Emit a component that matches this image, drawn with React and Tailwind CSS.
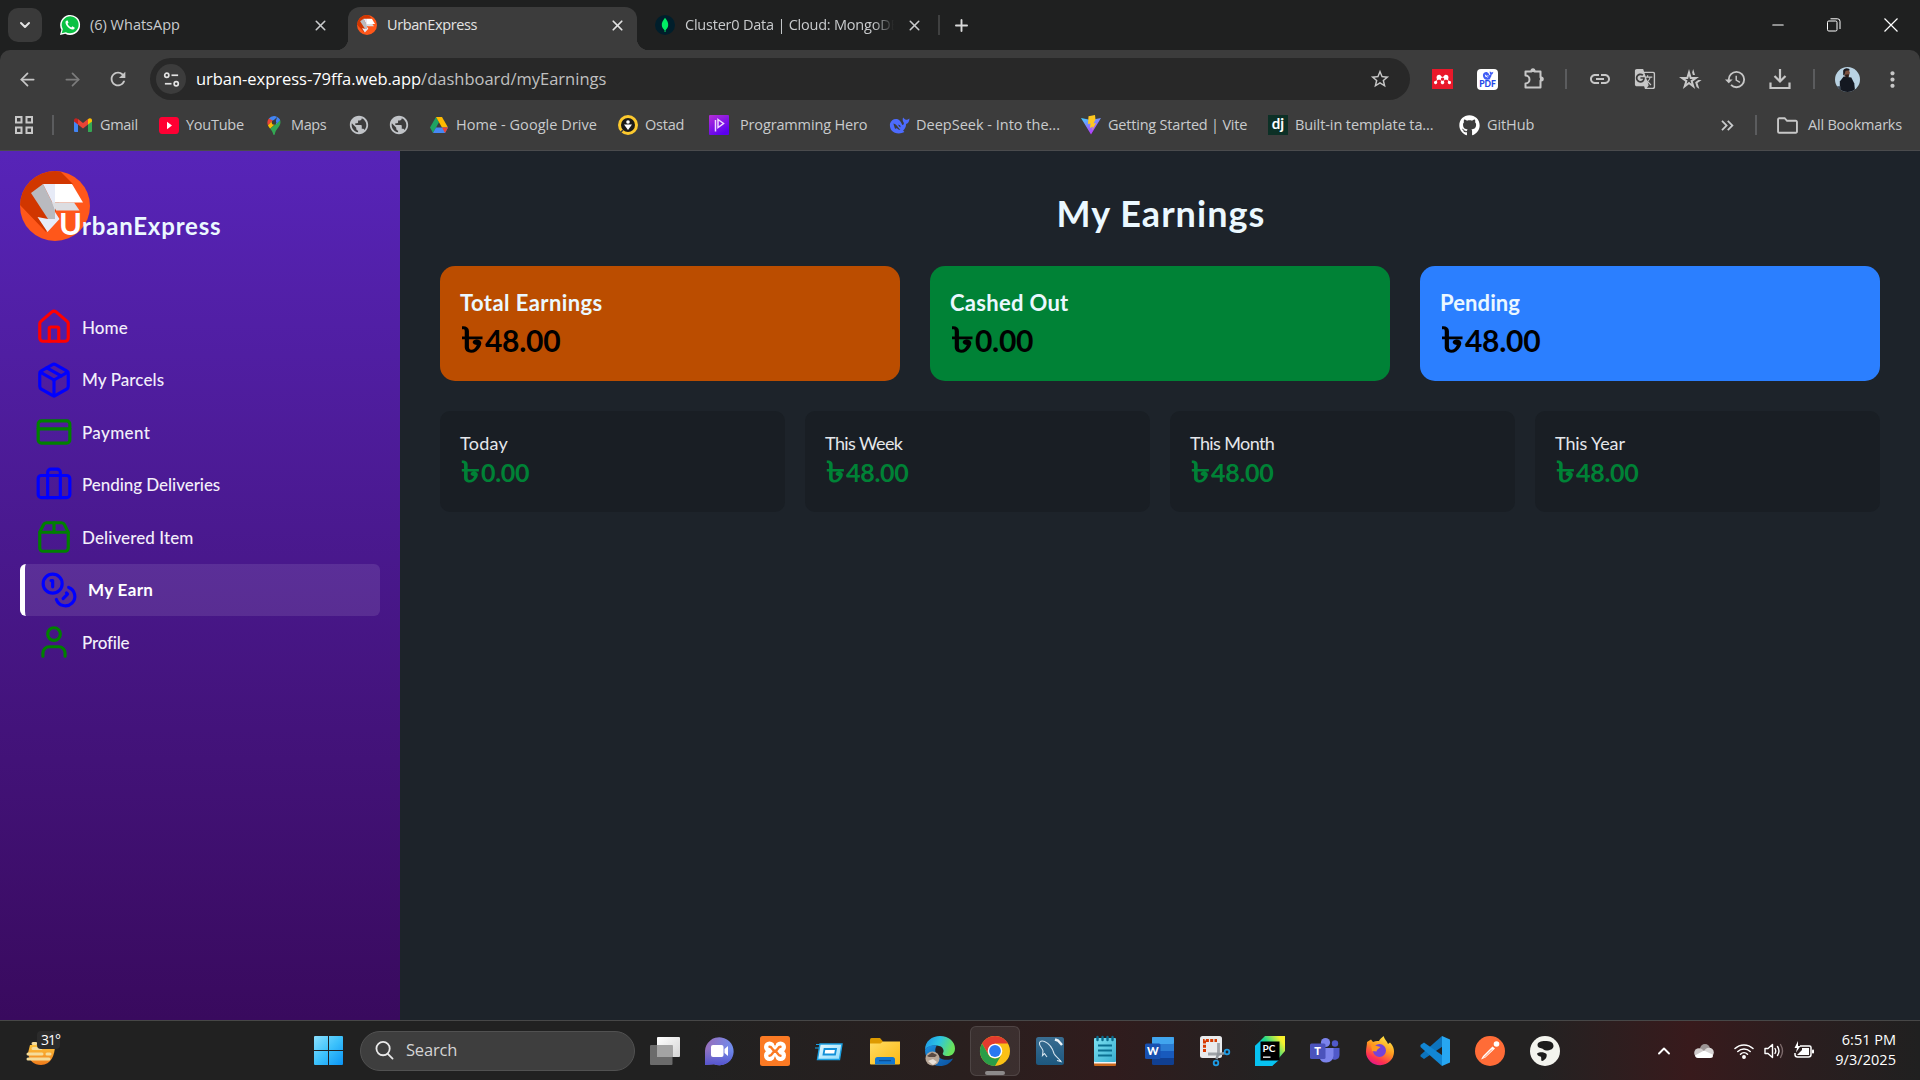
import React from "react";
import {
  House, Package, CreditCard, Briefcase, Package2, Coins, User,
  ArrowLeft, ArrowRight, ChevronDown, ChevronUp, X, Plus, Minus,
} from "lucide-react";
import { FaGithub } from "react-icons/fa6";
import { SiMendeley } from "react-icons/si";
import {
  MdPublic, MdStarBorder, MdHistory, MdLink, MdGTranslate,
  MdMoreVert, MdRefresh, MdOutlineHotelClass, MdKeyboardDoubleArrowRight,
} from "react-icons/md";

const Logo = ({ className }) => (
  <svg viewBox="0 0 70 70" className={className}>
    <defs>
      <clipPath id="disc"><circle cx="35" cy="35" r="35" /></clipPath>
    </defs>
    <g clipPath="url(#disc)">
      <rect width="70" height="70" fill="#ff571a" />
      <path d="M0 0H40L53 13 40 30 26 61 0 34Z" fill="#d13600" />
      <path d="M23 13 11 22 28 48H35V37Z" fill="#b9babf" />
      <path d="M23 13H35V39L32 31Z" fill="#e7ebf7" />
      <path d="M35 13H52L63 31.500H35Z" fill="#fff" />
      <path d="M32 31.500H54L59.500 39.500H36Z" fill="#dcdde1" />
      <path d="M17.500 46 28 48H35V41L39.500 48 27.500 61Z" fill="#e7ebf7" />
    </g>
  </svg>
);

const Mongo = () => (
  <svg viewBox="0 0 20 20" className="size-5">
    <circle cx="10" cy="10" r="10" fill="#001e2b" />
    <path d="M10 2.800C12.200 5.400 13.400 7.500 13.200 10.300 13 12.900 11.500 14.300 10.500 15.200V17H9.600V15.200C8.500 14.300 7 12.900 6.800 10.300 6.600 7.500 8 5.400 10 2.800Z" fill="#00ed64" />
  </svg>
);

const WhatsApp = () => (
  <svg viewBox="0 0 24 24" className="size-5 overflow-visible">
    <path d="M0 24 1.700 17.800A12 12 0 1 1 6.300 22.400Z" fill="#fff" />
    <path d="M2 22 3.400 17A10.200 10.200 0 1 1 7 20.600Z" fill="#0bc143" />
    <path d="M8.500 6.500C7.500 6.500 6.500 7.600 6.600 9 6.800 12.600 11.200 17.200 15 17.400 16.500 17.400 17.700 16.400 17.700 15.200L14.900 13.500 13.500 15C11.500 14.300 9.700 12.400 9 10.600L10.200 9.300 9.200 6.600Z" fill="#fff" />
  </svg>
);

const Whale = ({ className, color = "#4d6bfe", hole = "#3c3c3c" }) => (
  <svg viewBox="0 0 22 18" className={className}>
    <path d="M1 7C2 3.500 5 1.500 8.500 2.200 11 3 12.500 5 14 8.500 16 8 16 6.500 14.800 4.800 14.200 3.500 14.300 2 14.800.5 15.800 1.800 16.800 2.700 18 2.800 19.200 2.800 20.500 2.500 21.500 1.500 21.500 4 20.500 6.600 18 7.400 18 11 16.300 13 14.800 14.400L16.200 16C12 18.200 5.500 17.800 2.700 14.300 1.200 12.300.5 9.500 1 7Z" fill={color} />
    <path d="M4.500 7C6.500 7 9 10 11.800 13.800 9.500 13.800 8.800 12 7.800 11.700 7.500 13 6 12.500 5.800 11Z" fill={hole} />
    <path d="M9.500 8.300Q12 7.800 12.300 10.800L10.800 10.300Z" fill={hole} />
  </svg>
);

const AppsGrid = () => (
  <svg viewBox="0 0 18 18" className="size-[18px]" fill="none" stroke="#c7c7c7" strokeWidth="2">
    <rect x="1" y="1" width="5.500" height="5.500" /><rect x="11.500" y="1" width="5.500" height="5.500" />
    <rect x="1" y="11.500" width="5.500" height="5.500" /><rect x="11.500" y="11.500" width="5.500" height="5.500" />
  </svg>
);

const Gmail = () => (
  <svg viewBox="0 0 18 14" className="h-[14px] w-[18px]">
    <path d="M0 2V13a1 1 0 0 0 1 1H4V5Z" fill="#4285f4" />
    <path d="M18 2V13a1 1 0 0 1-1 1H14V5Z" fill="#34a853" />
    <path d="M14 1 9 5 4 1V6.500L9 10.500 14 6.500Z" fill="#ea4335" />
    <path d="M4 6.500V1.300C2.500-.3 0 .2 0 2.500V3.600Z" fill="#c5221f" />
    <path d="M14 6.500V1.300C15.500-.3 18 .2 18 2.500V3.600Z" fill="#fbbc04" />
  </svg>
);

const YouTube = () => (
  <svg viewBox="0 0 20 14" className="h-[17px] w-5" preserveAspectRatio="none">
    <rect width="20" height="14" rx="3" fill="#ff0033" /><path d="M8 4 13 7 8 10Z" fill="#fff" />
  </svg>
);

const Maps = () => (
  <svg viewBox="0 0 14 20" className="h-[19px] w-[14px]">
    <path d="M7 0A7 7 0 0 0 1.500 2.700L5 6 10.300 1C9.300.3 8.200 0 7 0Z" fill="#4285f4" />
    <path d="M1.600 2.600C0 4.700-.4 7.300.6 9.800L6 5Z" fill="#ea4335" />
    <path d="M.6 9.700C1.100 11 2 12.200 3 13.400L9.500 7 5 5.600Z" fill="#fbbc04" />
    <path d="M13.500 4.500C14.700 8.500 12.500 11 10.500 13.400 9 15.400 8.300 17 8 18.600 7.700 20.300 6.300 20.300 6 18.600 5.600 16.700 4.600 15.300 3 13.400Z" fill="#34a853" />
    <path d="M10.300 1C12 1.800 13 3 13.500 4.600L9 9 9 5Z" fill="#4285f4" />
    <circle cx="7" cy="6.800" r="2.400" fill="#3c3c3c" />
  </svg>
);

const Drive = () => (
  <svg viewBox="0 0 18 16" className="h-4 w-[18px]">
    <path d="M6 0 0 10.500 3 16 9 5.200Z" fill="#1ea362" />
    <path d="M6 0H12L18 10.500H12Z" fill="#ffba00" />
    <path d="M6 10.500H18L15 16H3Z" fill="#4688f4" />
    <path d="M12 10.500H18L15 16Z" fill="#ea4335" />
  </svg>
);

const Ostad = () => (
  <svg viewBox="0 0 20 20" className="size-5">
    <circle cx="10" cy="10" r="10" fill="#fcc92e" /><circle cx="10" cy="10" r="7" fill="#1a1a1a" />
    <circle cx="10" cy="7" r="1.800" fill="#fff" /><path d="M6 9.500H14L10 15Z" fill="#fff" />
    <path d="M1 19 5 15" stroke="#3c3c3c" strokeWidth="1.500" />
  </svg>
);

const ProgHero = () => (
  <svg viewBox="0 0 20 20" className="size-5">
    <defs><linearGradient id="ph" x1="0" y1="0" x2=".6" y2="1"><stop stopColor="#b62fd6" /><stop offset="1" stopColor="#5a00f0" /></linearGradient></defs>
    <rect width="20" height="20" rx="1" fill="url(#ph)" />
    <path d="M6.500 5V16.500M9 4.500 14.500 8.500 9 12.500Z" fill="none" stroke="#f0d8ff" strokeWidth="1.500" />
  </svg>
);

const Vite = () => (
  <svg viewBox="0 0 20 20" className="size-5">
    <defs><linearGradient id="vt" x1="0" y1="0" x2=".5" y2="1"><stop stopColor="#41d1ff" /><stop offset="1" stopColor="#bd34fe" /></linearGradient></defs>
    <path d="M0 3 10 19.500 20 3 10 5Z" fill="url(#vt)" />
    <path d="M14 0 7.500 1.200 7 9 9.500 8.500 9 13 12 11.500 11 15.500 15 8 12.500 8.500 14.500 4.500Z" fill="#ffc81f" />
  </svg>
);

const Django = () => (
  <span className="flex size-5 items-center justify-center bg-[#0c3026] pb-1 font-['Lato'] text-[15px] font-bold leading-none text-white">dj</span>
);

const bookmarks = [
  { icon: <Gmail />, label: "Gmail", w: "w-[85px]", gap: "gap-2", track: "tracking-[-0.3px]" },
  { icon: <YouTube />, label: "YouTube", w: "w-[108px]", gap: "gap-[7px]", track: "tracking-[-0.25px]" },
  { icon: <Maps />, label: "Maps", w: "w-[83px]", gap: "gap-[10px]", track: "tracking-[-0.4px]" },
  { icon: <MdPublic className="size-[22px] -ml-[2px] text-[#c0c3c7]" />, w: "w-[40px]" },
  { icon: <MdPublic className="size-[22px] -ml-[2px] text-[#c0c3c7]" />, w: "w-[40px]" },
  { icon: <Drive />, label: "Home - Google Drive", w: "w-[188px]", gap: "gap-[8px]", track: "tracking-[0.05px]" },
  { icon: <Ostad />, label: "Ostad", w: "w-[91px]", gap: "gap-[7px]", track: "tracking-[-0.2px]" },
  { icon: <ProgHero />, label: "Programming Hero", w: "w-[180px]", gap: "gap-[11px]", track: "tracking-[-0.15px]" },
  { icon: <Whale className="h-[17px] w-[21px]" />, label: "DeepSeek - Into the...", w: "w-[192px]", gap: "gap-[6px]", track: "tracking-[0px]" },
  { icon: <Vite />, label: "Getting Started | Vite", w: "w-[187px]", gap: "gap-[7px]", track: "tracking-[-0.2px]" },
  { icon: <Django />, label: "Built-in template ta...", w: "w-[191px]", gap: "gap-[7px]", track: "tracking-[-0.1px]" },
  { icon: <FaGithub className="size-[21px] text-white" />, label: "GitHub", w: "w-[90px]", gap: "gap-[7px]", track: "tracking-[-0.1px]" },
];

function TabStrip() {
  return (
    <div className="flex h-[50px] bg-[#1f2020] text-[14.5px] text-[#c9cbcd]">
      <div className="flex w-[348px] items-center rounded-br-xl pl-2">
        <div className="flex size-[34px] items-center justify-center rounded-[10px] bg-[#3a3a3a]">
          <ChevronDown className="size-4 text-[#e3e3e3]" strokeWidth={3} />
        </div>
        <div className="ml-[18px]"><WhatsApp /></div>
        <span className="ml-[10px]">(6) WhatsApp</span>
        <X className="ml-auto mr-[19px] size-[17px]" strokeWidth={2.2} />
      </div>
      <div className="relative mt-[7px] flex h-[43px] w-[289px] items-center rounded-t-[12px] bg-[#3c3c3c] pb-[7px] pl-[9px]">
        <div className="absolute -left-3 bottom-0 size-3 bg-[radial-gradient(circle_at_0_0,#1f2020_12px,#3c3c3c_12.5px)]" />
        <div className="absolute -right-3 bottom-0 size-3 bg-[radial-gradient(circle_at_100%_0,#1f2020_12px,#3c3c3c_12.5px)]" />
        <Logo className="size-5" />
        <span className="ml-[10px] tracking-[-0.4px] text-[#e3e3e3]">UrbanExpress</span>
        <X className="ml-auto mr-[11px] size-[17px] text-[#e3e3e3]" strokeWidth={2.4} />
      </div>
      <div className="flex items-center pl-[18px]">
        <Mongo />
        <span className="ml-[10px] w-[209px] overflow-hidden whitespace-nowrap tracking-[-0.22px] [mask-image:linear-gradient(to_right,#000_90%,transparent)]">Cluster0 Data | Cloud: MongoDB</span>
        <X className="ml-[12px] size-[17px]" strokeWidth={2.2} />
        <div className="ml-[15px] h-5 w-[2px] bg-[#3f4040]" />
        <Plus className="ml-[12px] size-[19px] text-[#d9d9d9]" strokeWidth={2.4} />
      </div>
      <div className="ml-auto flex items-center gap-[41px] pr-[22px] pb-px text-white">
        <Minus className="size-[18px]" strokeWidth={1.4} />
        <svg viewBox="0 0 14 14" className="mr-[2px] -ml-[1px] size-[14px]" fill="none" stroke="currentColor">
          <rect x=".5" y="3" width="9.500" height="10" rx="1.300" />
          <path d="M3.500 .8H10.500A2.500 2.500 0 0 1 13 3.300V11" />
        </svg>
        <svg viewBox="0 0 14 14" className="size-[14px]" stroke="currentColor" strokeWidth="1.200"><path d="M.5.5 13.500 13.500M13.500.5.5 13.500" /></svg>
      </div>
    </div>
  );
}

const Rule = ({ className }) => <div className={"h-5 w-[2px] bg-[#5b5c5e] " + className} />;

function Toolbar() {
  return (
    <div className="flex h-[58px] items-center text-[#c7c7c7]">
      <div className="flex w-[150px] items-center gap-[24px] pl-[17px]">
        <ArrowLeft className="size-[21px]" strokeWidth={2} />
        <ArrowRight className="size-[21px] text-[#7c7c7c]" strokeWidth={2} />
        <MdRefresh className="size-[22px]" />
      </div>
      <div className="flex h-[42px] w-[1260px] items-center rounded-full bg-[#282828] pl-[6px]">
        <div className="flex size-[30px] items-center justify-center rounded-full bg-[#3c3c3c]">
          <svg viewBox="0 0 18 18" className="size-[17px]" fill="none" stroke="#e3e3e3" strokeWidth="1.800">
            <circle cx="4" cy="4.500" r="2.200" /><path d="M9 4.500H16" />
            <circle cx="14" cy="13.500" r="2.200" /><path d="M2 13.500H9" />
          </svg>
        </div>
        <span className="ml-[10px] text-[16.5px] tracking-[-0.03px] text-white">urban-express-79ffa.web.app</span>
        <span className="text-[16.5px] text-[#c0c0c0]">/dashboard/myEarnings</span>
        <MdStarBorder className="ml-auto mr-[19px] size-[22px]" />
      </div>
      <div className="flex flex-1 items-center">
        <div className="ml-[22px] flex h-5 w-[21px] items-center justify-center bg-[#e9182a]">
          <SiMendeley className="size-[17px] text-white" />
        </div>
        <div className="ml-[24px] flex h-[21px] w-[21px] flex-col items-center rounded bg-white">
          <Whale className="mt-[2px] h-[9px] w-[14px]" color="#3f5cf5" hole="#fff" />
          <span className="font-['Lato'] text-[8.5px] font-black leading-[9px] text-[#2348e8]">PDF</span>
        </div>
        <svg viewBox="0 0 24 24" className="ml-[24px] size-[24px]" fill="none" stroke="currentColor" strokeWidth="2">
          <path d="M3.500 4.500H9.500A1.500 1.500 0 0 1 12.500 4.500H18.500V10.500A1.500 1.500 0 0 1 18.500 13.500V20.500H3.500V16.500A4 4 0 0 0 3.500 8.500Z" strokeLinejoin="round" />
          <path d="M9.500 4A1.500 1.800 0 0 1 12.500 4ZM19 10.500A1.800 1.500 0 0 1 19 13.500Z" fill="currentColor" />
        </svg>
        <Rule className="ml-[19px]" />
        <MdLink className="ml-[21px] size-[24px]" />
        <MdGTranslate className="ml-[22px] size-[22px]" />
        <MdOutlineHotelClass className="ml-[22px] size-[24px]" />
        <MdHistory className="ml-[22px] size-[23px]" />
        <svg viewBox="0 0 22 22" className="ml-[22px] size-[22px]" fill="none" stroke="currentColor" strokeWidth="2.200">
          <path d="M11 1V13M5.500 8 11 13.500 16.500 8M1.500 14.500V20H20.500V14.500" />
        </svg>
        <Rule className="ml-[22px]" />
        <svg viewBox="0 0 26 26" className="ml-[20px] size-[25px]">
          <defs><clipPath id="av"><circle cx="13" cy="13" r="13" /></clipPath></defs>
          <g clipPath="url(#av)">
            <rect width="26" height="26" fill="#b9d2e2" />
            <path d="M5 26 5 15 9 10 17 11 20 17 21 26Z" fill="#141821" />
            <path d="M0 20H6V26H0Z" fill="#3a4350" />
            <path d="M9 3 14 2 15.500 6 14 10.500 10 10Z" fill="#7b4f3d" />
            <path d="M8.500 4C9 .5 15 .3 15.500 3.500L11 4 9.500 9 8.500 8Z" fill="#1b1a1f" />
            <path d="M10.500 8 14.500 7.500 14 11 11 11Z" fill="#2a1c1a" />
          </g>
        </svg>
        <MdMoreVert className="ml-[20px] size-[25px]" />
      </div>
    </div>
  );
}

function Bookmarks() {
  return (
    <div className="flex h-[34px] items-center text-[14.5px] text-[#c9cbcd]">
      <div className="flex w-[74px] items-center pl-[15px]">
        <AppsGrid /><Rule className="ml-[19px]" />
      </div>
      {bookmarks.map((b, i) => (
        <div key={i} className={`flex shrink-0 items-center whitespace-nowrap ${b.w} ${b.gap || ""}`}>
          {b.icon}{b.label && <span className={b.track}>{b.label}</span>}
        </div>
      ))}
      <div className="ml-auto flex items-center pr-[18px]">
        <MdKeyboardDoubleArrowRight className="size-[21px]" />
        <Rule className="ml-[17px]" />
        <svg viewBox="0 0 22 18" className="ml-5 h-[17px] w-[21px]" fill="none" stroke="#c7c7c7" strokeWidth="2">
          <path d="M1 2.500A1.200 1.200 0 0 1 2.200 1.300H8L10.500 4H19.800A1.200 1.200 0 0 1 21 5.200V15.500A1.200 1.200 0 0 1 19.800 16.700H2.200A1.200 1.200 0 0 1 1 15.500Z" />
        </svg>
        <span className="ml-[10px] tracking-[-0.2px]">All Bookmarks</span>
      </div>
    </div>
  );
}

const nav = [
  { Icon: House, label: "Home", color: "text-[#ff0000]", track: "tracking-[0.1px]" },
  { Icon: Package, label: "My Parcels", color: "text-[#0000ff]", track: "tracking-[0.1px]" },
  { Icon: CreditCard, label: "Payment", color: "text-[#008000]", track: "tracking-[0.35px]" },
  { Icon: Briefcase, label: "Pending Deliveries", color: "text-[#0000ff]", track: "tracking-[-0.05px]" },
  { Icon: Package2, label: "Delivered Item", color: "text-[#008000]", track: "tracking-[0.1px]" },
  { Icon: Coins, label: "My Earn", color: "text-[#0000ff]", active: true },
  { Icon: User, label: "Profile", color: "text-[#008000]", track: "tracking-[-0.2px]" },
];

function Sidebar() {
  return (
    <aside className="flex w-[400px] flex-col bg-linear-to-b from-[#5724b8] to-[#390a5e] px-5 pt-5 font-['Lato']">
      <div className="flex h-[70px] items-end">
        <Logo className="size-[70px] shrink-0" />
        <div className="relative -mb-[2px] -ml-[31px] flex items-baseline font-bold text-[#ebf8ff]">
          <span className="text-[31px] leading-10 text-white">U</span>
          <span className="text-[24px] leading-8 tracking-[0.8px]">rbanExpress</span>
        </div>
      </div>
      <nav className="mt-[60px] flex flex-col">
        {nav.map(({ Icon, label, color, active, track }) => (
          <a
            key={label}
            className={
              active
                ? "flex h-[52.5px] items-center rounded-md border-l-[5px] border-white bg-white/10 pl-[15px] text-[17px] font-bold text-white"
                : "flex h-[52.5px] items-center pl-[15px] text-[17px] font-medium text-[#f3effa]"
            }
          >
            <Icon className={`size-[38px] ${color}`} strokeWidth={2} />
            <span className={active ? "ml-[10px] tracking-[0.35px]" : `ml-[9px] ${track}`}>{label}</span>
          </a>
        ))}
      </nav>
    </aside>
  );
}

const totals = [
  { title: "Total Earnings", value: "48.00", bg: "bg-[#bb4d00]", track: "tracking-[0.42px]" },
  { title: "Cashed Out", value: "0.00", bg: "bg-[#008236]", track: "tracking-[0.3px]" },
  { title: "Pending", value: "48.00", bg: "bg-[#2b7fff]", track: "tracking-[0.1px]" },
];
const periods = [
  { title: "Today", value: "0.00", track: "tracking-[0.25px]" },
  { title: "This Week", value: "48.00", track: "tracking-[-0.6px]" },
  { title: "This Month", value: "48.00", track: "tracking-[-0.6px]" },
  { title: "This Year", value: "48.00", track: "tracking-[-0.1px]" },
];

function Earnings() {
  return (
    <main className="flex-1 bg-[#1d232a] px-10 pt-[38px] font-['Lato']">
      <h1 className="h-[77px] pl-[2px] text-center text-[36px] font-bold leading-[48px] tracking-[1.05px] text-[#ebf8ff]">My Earnings</h1>
      <div className="grid grid-cols-3 gap-[30px]">
        {totals.map((t) => (
          <div key={t.title} className={`h-[115px] rounded-[15px] p-5 ${t.bg}`}>
            <div className={`h-[33px] text-[22px] font-bold leading-[34px] text-[#ebf8ff] ${t.track}`}>{t.title}</div>
            <div className="flex h-10 items-baseline text-[30px] font-bold leading-[38px] text-black">
              <span className="ml-px w-[24px] origin-left scale-x-[1.32] text-[35px]">৳</span>
              <span className="tracking-[-0.3px]">{t.value}</span>
            </div>
          </div>
        ))}
      </div>
      <div className="mt-[30px] grid grid-cols-4 gap-5">
        {periods.map((p) => (
          <div key={p.title} className="h-[101px] rounded-[10px] bg-[#191e24] p-5">
            <div className={`h-[26px] text-[18px] leading-[25px] text-[#e5e7eb] ${p.track}`}>{p.title}</div>
            <div className="flex h-[33px] items-baseline text-[25px] font-bold leading-[28px] text-[#008236]">
              <span className="ml-px w-[20px] origin-left scale-x-[1.32] text-[29px]">৳</span>
              <span className="tracking-[-0.3px]">{p.value}</span>
            </div>
          </div>
        ))}
      </div>
    </main>
  );
}

const S = ({ children }) => <svg viewBox="0 0 30 30" className="size-[30px] overflow-visible">{children}</svg>;

const apps = [
  <S key="task">
    <defs><linearGradient id="tv" x1="0" y1="0" x2="1" y2="1"><stop stopColor="#fff" /><stop offset="1" stopColor="#d4d4d4" /></linearGradient></defs>
    <rect x="7" y="1" width="23" height="20" rx="1" fill="url(#tv)" />
    <rect y="9" width="22.500" height="20" rx="1" fill="#6b6b6b" />
    <rect x="7" y="9" width="15.500" height="12" fill="#a3a3a3" />
  </S>,
  <S key="chat">
    <defs><linearGradient id="ch" x1="0" y1="0" x2="1" y2=".3"><stop stopColor="#9a6bb5" /><stop offset="1" stopColor="#6f8df0" /></linearGradient>
      <linearGradient id="ch2" x1="0" y1="0" x2="0" y2="1"><stop offset=".4" stopColor="#5b5fc7" stopOpacity="0" /><stop offset="1" stopColor="#5452d0" /></linearGradient></defs>
    <path d="M0 29V15A14.300 14 0 1 1 9 28.300Z" fill="url(#ch)" /><path d="M0 29V15A14.300 14 0 1 1 9 28.300Z" fill="url(#ch2)" />
    <rect x="6" y="9" width="12.500" height="12" rx="2" fill="#fff" /><path d="M19.500 13 23 10V20L19.500 17Z" fill="#fff" />
  </S>,
  <S key="xampp">
    <rect width="30" height="30" rx="2.500" fill="#fb7a24" />
    <g fill="#fff">
      <circle cx="9.500" cy="11" r="5.500" /><circle cx="20.500" cy="11" r="5.500" />
      <circle cx="9.500" cy="19.500" r="5.500" /><circle cx="20.500" cy="19.500" r="5.500" /><rect x="7" y="11" width="16" height="8.500" />
    </g>
    <path d="M9.500 10.800C12.500 10.800 11.500 14 15 15.200M9.500 19.700C12.500 19.700 11.500 16.500 15 15.200M20.500 10.800C17.500 10.800 18.500 14 15 15.200M20.500 19.700C17.500 19.700 18.500 16.500 15 15.200" fill="none" stroke="#fb7a24" strokeWidth="2.400" strokeLinecap="round" />
    <path d="M15 5V9M15 21.500V26" stroke="#fb7a24" strokeWidth="1.500" />
  </S>,
  <S key="run">
    <defs><linearGradient id="rn" x1="0" y1="0" x2="1" y2="1"><stop stopColor="#e6f9ff" /><stop offset="1" stopColor="#8edcfb" /></linearGradient></defs>
    <path d="M5 8H27L24.500 23.500H2.500Z" fill="url(#rn)" stroke="#1ba0e2" strokeWidth="1.400" />
    <path d="M9.500 13H21L20 18.500H8.500Z" fill="#fff" stroke="#1290d8" strokeWidth="1.800" />
    <path d="M1 8.500H5M0 12H4" stroke="#1ba0e2" strokeWidth="1.200" />
  </S>,
  <S key="explorer">
    <defs><linearGradient id="fo" x1="0" y1="0" x2="1" y2="1"><stop stopColor="#ffdc63" /><stop offset="1" stopColor="#fbb912" /></linearGradient></defs>
    <path d="M0 3.500Q0 2 1.500 2H10L13 5.500V10H0Z" fill="#dd9a00" />
    <path d="M0 7.500H10.500L13 5.500H30V27.500Q30 28.500 29 28.500H1Q0 28.500 0 27.500Z" fill="url(#fo)" />
    <path d="M5 28.500V23.500Q5 21 7.500 21H22.500Q25 21 25 23.500V28.500Z" fill="#1176cf" /><path d="M9 24.600H21" stroke="#0b4f95" strokeWidth="1.300" />
  </S>,
  <S key="edge">
    <defs>
      <linearGradient id="e1" x1="0" y1="0" x2="1" y2=".3"><stop stopColor="#1c93e8" /><stop offset=".5" stopColor="#2cc4e3" /><stop offset="1" stopColor="#69e35c" /></linearGradient>
      <linearGradient id="e2" x1="0" y1="0" x2="1" y2="1"><stop stopColor="#1c8fe0" /><stop offset="1" stopColor="#0b4f9c" /></linearGradient>
    </defs>
    <path d="M0 14C0 5 7 0 15 0 24 0 30 6 30 12.500 30 17.500 26.500 20 22.500 20 19 20 17 18.500 18 17 19.500 15 18.500 10 12 9.500 6 9.300 1.500 11 0 14Z" fill="url(#e1)" />
    <path d="M0 14C1.500 10.500 6.500 8.700 12 9.500 9.500 12 9.500 18 13.500 21 17.500 24.500 24 24.500 28 22.500 25.500 27.500 20.500 30 15 30 6 30 0 23 0 14Z" fill="url(#e2)" />
    <circle cx="7.500" cy="22.500" r="7" fill="#b7a697" /><path d="M2 20 7 16.500 12 19 10 21 4 21Z" fill="#5a4a42" /><path d="M3 25 8 23 12 26 8 29Z" fill="#e8e0d8" />
  </S>,
  <div key="chrome" className="relative flex size-[50px] shrink-0 items-center justify-center rounded-md border border-white/10 bg-white/8">
    <S>
      <circle cx="15" cy="15" r="15" fill="#fbc116" />
      <path d="M2 7.500A15 15 0 0 1 28 7.500H15L8.500 18.700Z" fill="#e33b2e" />
      <path d="M2 7.500 8.500 18.700A7.500 7.500 0 0 0 21.500 18.700L15 30A15 15 0 0 1 2 7.500Z" fill="#2a9d48" />
      <circle cx="15" cy="15" r="7.300" fill="#fff" /><circle cx="15" cy="15" r="5.900" fill="#2a78f0" />
    </S>
    <div className="absolute bottom-0 h-1 w-5 rounded-full bg-[#8d8a8a]" />
  </div>,
  <S key="mysql">
    <defs><linearGradient id="my" x1="0" y1="0" x2="0" y2="1"><stop stopColor="#3a6d91" /><stop offset="1" stopColor="#1d587f" /></linearGradient></defs>
    <rect x="1" y="1" width="28" height="28" rx="2.500" fill="url(#my)" />
    <path d="M4.500 8C4 5 7 4.500 9.500 5.500 14 7.500 17.500 12 19 17.500 20.500 20.500 23.500 22 26 25.500L22 24.500M4.500 8C5 11 7.500 12 8 15L7.500 19.500 9.500 17.500 12 21" fill="none" stroke="#d5e4ee" strokeWidth="1.100" />
    <path d="M20 3.500 23 4.500 27 9" stroke="#eef4f8" strokeWidth="2.500" fill="none" />
  </S>,
  <S key="notes">
    <defs><linearGradient id="np" x1="0" y1="0" x2="1" y2="1"><stop stopColor="#7de1f2" /><stop offset="1" stopColor="#38aed0" /></linearGradient></defs>
    <rect x="4" y="26" width="22" height="4" rx="1" fill="#c9671c" /><rect x="4" y="24" width="22" height="3.500" fill="#f4f4f4" />
    <rect x="4" y="2" width="22" height="24" rx="1" fill="url(#np)" />
    <path d="M8 9.500H22M8 14.500H22M8 19.500H22" stroke="#0a6f91" strokeWidth="1.800" />
    <path d="M7.500 1V4M12.500 1V4M17.500 1V4M22.500 1V4" stroke="#0a6c8e" strokeWidth="2.400" strokeLinecap="round" />
  </S>,
  <S key="word">
    <rect x="7" y="1" width="22" height="28" rx="1.500" fill="#103f91" /><rect x="7" y="1" width="22" height="21" fill="#185abd" />
    <rect x="7" y="1" width="22" height="14" fill="#2b7cd3" /><rect x="7" y="1" width="22" height="7" rx="1.500" fill="#41a5ee" />
    <rect x="0" y="7.500" width="15.500" height="15.500" rx="1.500" fill="#1850b0" />
    <text x="7.700" y="19" textAnchor="middle" fontFamily="Lato" fontWeight="900" fontSize="11" fill="#fff">W</text>
  </S>,
  <S key="snip">
    <rect width="22" height="22" rx="2.500" fill="#e9eaec" /><path d="M4.500 16V4.500H17" stroke="#d83b01" strokeWidth="3" strokeDasharray="3 1.300" fill="none" />
    <path d="M18.500 7V18H8" stroke="#9fa3a8" strokeWidth="2.800" fill="none" /><path d="M18.500 17 16.500 23M18 18.500 25 17" stroke="#8f949a" strokeWidth="2.500" />
    <circle cx="27" cy="16" r="2.300" fill="none" stroke="#1d9ce5" strokeWidth="1.800" /><circle cx="16" cy="27" r="2.300" fill="none" stroke="#1d9ce5" strokeWidth="1.800" />
  </S>,
  <S key="pycharm">
    <defs><linearGradient id="pc" x1="0" y1=".8" x2="1" y2=".1"><stop offset=".2" stopColor="#07c3f2" /><stop offset=".55" stopColor="#21d789" /><stop offset=".9" stopColor="#f7f22d" /></linearGradient></defs>
    <path d="M10 0H30V15L17 30H0V10Z" fill="url(#pc)" /><path d="M0 10 7 4V24H24L17 30H0Z" fill="#07c3f2" /><rect x="5.500" y="5.500" width="19" height="19" fill="#000" />
    <text x="7.500" y="15.500" fontFamily="Lato" fontWeight="700" fontSize="10" fill="#fff">PC</text><rect x="8" y="20.500" width="7.500" height="1.300" fill="#fff" />
  </S>,
  <S key="teams">
    <circle cx="15.500" cy="6.500" r="4.600" fill="#7b83eb" /><circle cx="25" cy="7.500" r="3.200" fill="#5059c9" />
    <path d="M20 12H29.500V19A5 5 0 0 1 20 21Z" fill="#5059c9" /><path d="M9 12H23.500V20A7.500 8 0 0 1 9 21Z" fill="#7b83eb" />
    <rect x="0" y="7.500" width="15.500" height="15.500" rx="1.500" fill="#4b53bc" />
    <text x="7.700" y="19" textAnchor="middle" fontFamily="Lato" fontWeight="900" fontSize="11" fill="#fff">T</text>
  </S>,
  <S key="firefox">
    <defs><linearGradient id="ff" x1=".8" y1="0" x2=".3" y2="1"><stop stopColor="#fff04a" /><stop offset=".45" stopColor="#ff9a1f" /><stop offset=".8" stopColor="#ff3150" /><stop offset="1" stopColor="#e0178c" /></linearGradient></defs>
    <path d="M2 6 6 3.500 8 6C10 5 12 4.800 14 5 15 3 17 1.500 18.500 0 19.500 3.500 22 5 23 8L25 6.500C28 9.500 29 12.500 29 15.500A14 13.500 0 0 1 1 16C1 12 2 9 2 6Z" fill="url(#ff)" />
    <circle cx="14.500" cy="14.500" r="6.500" fill="#7543d8" />
    <path d="M6 8.500 10 9.500 15.500 11C13.500 13 11.500 13.500 11.500 15.500L7 15Z" fill="#ff9a1f" />
  </S>,
  <S key="vscode">
    <path d="M22 0 24 9.500 4 23 .5 20.500V19Z" fill="#0d74bd" /><path d="M22 30 24 20.500 4 6.500 .5 9V11Z" fill="#1286d3" />
    <path d="M22 0 30 3.500V26.500L22 30Z" fill="#27a7f2" />
  </S>,
  <S key="postman">
    <circle cx="15" cy="15" r="15" fill="#ff6c37" />
    <path d="M6 23.500 8 20 17.500 10.500 20 12.500 10.500 21.500Z" fill="#fff" /><path d="M9 21.500 17 13.500" stroke="#ff6c37" strokeWidth=".8" /><circle cx="21.500" cy="8" r="2.800" fill="#fff" />
  </S>,
  <S key="phero">
    <circle cx="15" cy="15" r="15" fill="#f3f4ee" />
    <path d="M7.500 9C7.500 6 11 5 15 5 20 5 23.500 6 23.500 10 23.500 13 20 14.500 16.500 14.500 14 14.500 13.500 13 12 12.500 9.500 12 7.500 11.500 7.500 9Z" fill="#1c1c1c" />
    <path d="M7 17.500C9.500 15.800 14 15.800 16.500 18 17.500 21 15 24.500 12 25 10.500 24.500 12 21.500 10.500 20.500 9 20 7.500 20 7 17.500Z" fill="#1c1c1c" />
  </S>,
];

function Taskbar() {
  return (
    <div className="flex h-[60px] items-center border-t border-[#474747] bg-[linear-gradient(90deg,#212121_0,#212121_36%,#291f1e_50%,#301c1d_58%,#232222_66%,#232222_80%,#381a1c_88%,#2a1e1f_94%,#202020_100%)]">
      <div className="flex w-[314px] items-center pl-[24px]">
        <svg viewBox="0 0 36 36" className="-mt-1 size-9 overflow-visible">
          <defs><linearGradient id="sun" x1="0" y1="0" x2="0" y2="1"><stop stopColor="#fdc33c" /><stop offset="1" stopColor="#ef7b1b" /></linearGradient></defs>
          <path d="M6 14H31C31 24 27 34 17 34 10 34 5 30 4 22Z" fill="url(#sun)" />
          <path d="M9 12.500H12M9 17.500H17M4 23H18M23 23H26M4 28H25" stroke="#f5dc9a" strokeWidth="3" strokeLinecap="round" />
          <rect x="13" y="0" width="23" height="18" rx="4" fill="#2b2b2b" />
          <text x="17" y="13.500" fontFamily="Open Sans" fontSize="14" letterSpacing="-1" fill="#fff">31°</text>
        </svg>
      </div>
      <svg viewBox="0 0 29 29" className="size-[29px]">
        <defs><linearGradient id="win" x1="0" y1="0" x2="1" y2="1"><stop stopColor="#8be0ff" /><stop offset=".5" stopColor="#3cc1fb" /><stop offset="1" stopColor="#0a94f5" /></linearGradient></defs>
        <path d="M1 0H14V14H0V1Q0 0 1 0ZM15 0H28Q29 0 29 1V14H15ZM0 15H14V29H1Q0 29 0 28ZM15 15H29V28Q29 29 28 29H15Z" fill="url(#win)" />
      </svg>
      <div className="ml-[17px] flex h-10 w-[275px] items-center rounded-full border border-[#515151] bg-[#3e3e3e] pl-[14px]">
        <svg viewBox="0 0 20 20" className="size-[19px]" fill="none" stroke="#e9e9e9" strokeWidth="1.900" strokeLinecap="round">
          <circle cx="8.500" cy="8" r="7" /><path d="M13.500 13.500 18.500 18.500" />
        </svg>
        <span className="ml-[12px] text-[16.5px] tracking-[-0.2px] text-[#d4d4d4]">Search</span>
      </div>
      <div className="ml-[2px] flex">
        {apps.map((a, i) => (
          <div key={i} className="flex h-[58px] w-[55px] items-center justify-center">{a}</div>
        ))}
      </div>
      <div className="ml-auto flex items-center pr-[24px] text-white">
        <ChevronUp className="size-[20px]" strokeWidth={2.3} />
        <svg viewBox="0 0 20 14" className="ml-[20px] h-[14px] w-5">
          <circle cx="11" cy="5" r="5" fill="#9c9595" /><circle cx="5" cy="9" r="4.800" fill="#cfcaca" /><circle cx="15" cy="8.500" r="4.800" fill="#d9d6d6" />
          <path d="M1 11.500 10 6.500 18.500 10.500Q20 14 16 14H4Q1.500 14 1 11.500Z" fill="#fff" />
        </svg>
        <svg viewBox="0 0 20 16" className="ml-[20px] h-4 w-5" fill="none" stroke="#fff" strokeWidth="1.500" strokeLinecap="round">
          <path d="M1 5.500A13 13 0 0 1 19 5.500M3.800 8.500A9 9 0 0 1 16.200 8.500M6.500 11.200A5 5 0 0 1 13.500 11.200" /><circle cx="10" cy="14" r="1.200" fill="#fff" />
        </svg>
        <svg viewBox="0 0 20 18" className="ml-[10px] h-[18px] w-5" fill="none" stroke="#fff" strokeWidth="1.400" strokeLinecap="round" strokeLinejoin="round">
          <path d="M1 6.500H4L8.500 2.500V15.500L4 11.500H1Z" /><path d="M11 6.500Q12.500 9 11 11.500M13.500 4.500Q16.500 9 13.500 13.500" /><path d="M16.500 2.500Q20.500 9 16.500 15.500" stroke="#7c6a6b" />
        </svg>
        <svg viewBox="0 0 20 18" className="-mt-[2px] ml-[10px] h-[18px] w-5">
          <path d="M6 5H15.500Q17 5 17 6.500V13.500Q17 16 14.500 16H3.500Q1 16 1 13.500V12" fill="none" stroke="#fff" strokeWidth="1.500" />
          <path d="M8 7H15V14H3L8 9Z" fill="#fff" /><rect x="18" y="8.500" width="2" height="4" rx=".8" fill="#fff" /><path d="M4 0 .5 7H3L2 11.500 6.500 5H4Z" fill="#fff" />
        </svg>
        <div className="-mt-[2px] ml-[20px] flex w-[62px] flex-col items-end whitespace-nowrap text-[14.5px] leading-5">
          <span>6:51 PM</span>
          <span className="tracking-[0.05px]">9/3/2025</span>
        </div>
      </div>
    </div>
  );
}

export default function App() {
  return (
    <div className="flex h-[1080px] w-[1920px] flex-col overflow-hidden bg-[#202020] font-['Open_Sans','Noto_Sans',sans-serif]">
      <TabStrip />
      <div className="bg-[#1f2020]">
        <div className="h-[101px] rounded-t-[10px] border-b border-[#4a4b4d] bg-[#3c3c3c]">
          <Toolbar />
          <Bookmarks />
        </div>
      </div>
      <div className="flex min-h-0 flex-1">
        <Sidebar />
        <Earnings />
      </div>
      <Taskbar />
    </div>
  );
}
